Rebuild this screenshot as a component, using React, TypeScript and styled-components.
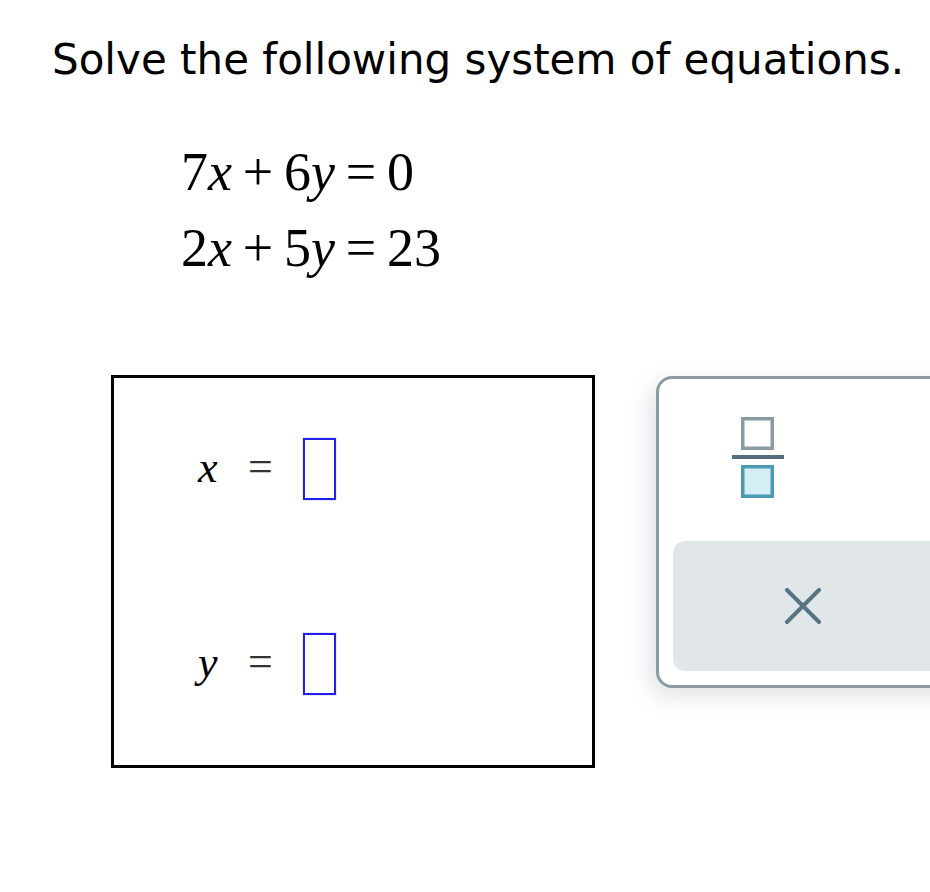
import React from "react";
import styled, { createGlobalStyle } from "styled-components";

const Global = createGlobalStyle`
  html, body { margin: 0; padding: 0; background: #ffffff; }
  body { overflow: hidden; }
`;

const Page = styled.div`
  width: 930px;
  height: 892px;
  overflow: hidden;
  padding: 35px 0 0 52px;
  box-sizing: border-box;
`;

const Title = styled.h1`
  margin: 0;
  font-family: "DejaVu Sans", Verdana, sans-serif;
  font-weight: normal;
  font-size: 42px;
  line-height: 49px;
  color: #000;
  white-space: nowrap;
`;

const Equations = styled.div`
  margin: 50px 0 0 129px;
  font-family: "Liberation Serif", "Times New Roman", serif;
  font-size: 54px;
  line-height: 76px;
  color: #000;
`;

const EqLine = styled.div`
  white-space: nowrap;
`;

const Var = styled.span`
  font-style: italic;
`;

const Op = styled.span`
  margin: 0 0.2em;
`;

const WorkRow = styled.div`
  display: flex;
  align-items: flex-start;
  gap: 61px;
  margin: 89px 0 0 59px;
`;

const AnswerBox = styled.div`
  flex: none;
  width: 484px;
  height: 393px;
  box-sizing: border-box;
  border: 3px solid #000;
  padding: 60px 0 0 84px;
  display: flex;
  flex-direction: column;
  gap: 133px;
`;

const AnswerRow = styled.div`
  display: flex;
  align-items: center;
  height: 62px;
  font-family: "Liberation Serif", "Times New Roman", serif;
  font-size: 44px;
  color: #000;
`;

const RowVar = styled.span`
  font-style: italic;
  width: 20px;
  line-height: 62px;
  position: relative;
  top: -1px;
`;

const RowEq = styled.span`
  margin-left: 30px;
  line-height: 62px;
  position: relative;
  top: -2px;
  color: #333;
`;

const Slot = styled.span`
  margin-left: 30px;
  width: 33px;
  height: 62px;
  box-sizing: border-box;
  border: 2px solid #2020e6;
  box-shadow: 0 0 1px rgba(32, 32, 230, 0.6);
`;

const Palette = styled.div`
  flex: none;
  margin-top: 1px;
  width: 320px;
  height: 312px;
  box-sizing: border-box;
  border: 3px solid #8a9ba3;
  border-radius: 16px;
  background: #fff;
  box-shadow: -6px 8px 22px rgba(60, 80, 90, 0.16);
  padding: 38px 0 14px 14px;
  display: flex;
  flex-direction: column;
`;

const FractionKey = styled.button`
  align-self: flex-start;
  margin-left: 58px;
  width: 54px;
  height: 84px;
  padding: 0;
  border: none;
  background: transparent;
  display: flex;
  align-items: center;
  justify-content: center;
`;

const ClearKey = styled.button`
  margin-top: 40px;
  height: 131px;
  border: none;
  border-radius: 12px 0 0 12px;
  background: #e1e6e9;
  display: flex;
  align-items: center;
  padding: 0 0 0 111px;
`;

export default function App() {
  return (
    <>
      <Global />
      <Page>
        <Title>Solve the following system of equations.</Title>
        <Equations>
          <EqLine>
            7<Var>x</Var>
            <Op>+</Op>6<Var>y</Var>
            <Op>=</Op>0
          </EqLine>
          <EqLine>
            2<Var>x</Var>
            <Op>+</Op>5<Var>y</Var>
            <Op>=</Op>23
          </EqLine>
        </Equations>
        <WorkRow>
          <AnswerBox>
            <AnswerRow>
              <RowVar>x</RowVar>
              <RowEq>=</RowEq>
              <Slot />
            </AnswerRow>
            <AnswerRow>
              <RowVar>y</RowVar>
              <RowEq>=</RowEq>
              <Slot />
            </AnswerRow>
          </AnswerBox>
          <Palette>
            <FractionKey aria-label="fraction">
              <svg width="52" height="84" viewBox="0 0 52 84">
                <rect x="10.75" y="1.75" width="29.5" height="29.5" fill="#fff" stroke="#8a9ba3" strokeWidth="3.5" />
                <rect x="0" y="38" width="52" height="4" fill="#55707d" />
                <rect x="10.75" y="49.75" width="29.5" height="29.5" fill="#d4eef6" stroke="#4a9ab3" strokeWidth="3.5" />
              </svg>
            </FractionKey>
            <ClearKey aria-label="clear">
              <svg width="38" height="36" viewBox="0 0 38 36">
                <path d="M3 2 L35 34 M35 2 L3 34" stroke="#587482" strokeWidth="4" strokeLinecap="round" fill="none" />
              </svg>
            </ClearKey>
          </Palette>
        </WorkRow>
      </Page>
    </>
  );
}
